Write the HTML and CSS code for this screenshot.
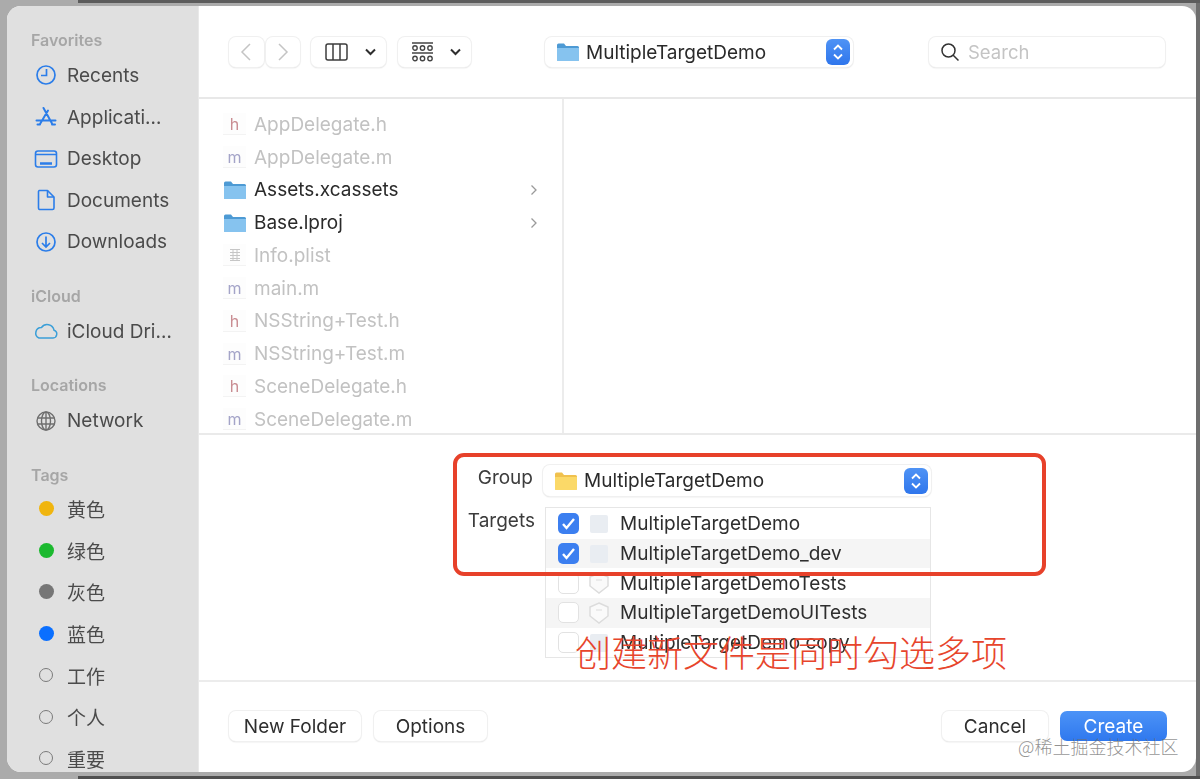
FILE: index.html
```html
<!DOCTYPE html>
<html lang="en">
<head>
<meta charset="utf-8">
<title>Save dialog</title>
<link rel="stylesheet" href="styles.css">
</head>
<body>
<div class="stage">
  <div class="window">
    <aside class="sidebar">
      <section class="side-group">
        <h2 class="side-label">Favorites</h2>
        <div class="side-row"><span class="side-icon"><svg width="24" height="24" viewBox="0 0 24 24" fill="none" stroke="#2b7de9" stroke-width="1.7"><circle cx="12" cy="12" r="9"/><path d="M12.5 6v6.5H7"/></svg></span>Recents</div>
        <div class="side-row"><span class="side-icon"><svg width="24" height="24" viewBox="0 0 24 24" fill="none" stroke="#2b7de9" stroke-width="2" stroke-linecap="round"><path d="M9.500 3l8.500 15.500M14 5.500L6 19M2.500 15.500h19M6 19.500H3.500M21 19.500h-3"/></svg></span>Applicati…</div>
        <div class="side-row"><span class="side-icon"><svg width="24" height="24" viewBox="0 0 24 24" fill="none" stroke="#2b7de9" stroke-width="1.6"><rect x="1.500" y="4" width="21" height="16" rx="2.500"/><path d="M2 7.500h20"/><path d="M6 16.500h12" stroke-width="2.600"/></svg></span>Desktop</div>
        <div class="side-row"><span class="side-icon"><svg width="24" height="24" viewBox="0 0 24 24" fill="none" stroke="#2b7de9" stroke-width="1.6" stroke-linejoin="round"><path d="M5 2.500h8.500L20 9v11a1.500 1.500 0 0 1-1.500 1.500h-13A1.500 1.500 0 0 1 4.500 20V3.500z"/><path d="M13.500 2.500V9H20"/></svg></span>Documents</div>
        <div class="side-row"><span class="side-icon"><svg width="24" height="24" viewBox="0 0 24 24" fill="none" stroke="#2b7de9" stroke-width="1.7"><circle cx="12" cy="12" r="9"/><path d="M12 6.500v10M8 13l4 4 4-4"/></svg></span>Downloads</div>
      </section>
      <section class="side-group">
        <h2 class="side-label">iCloud</h2>
        <div class="side-row"><span class="side-icon"><svg class="cloud" width="26" height="24" viewBox="0 0 26 24" fill="none" stroke="#3b9fd8" stroke-width="1.500"><path d="M6 19h14a4 4 0 0 0 1-7.800A7 7 0 0 0 8.500 8.500 5.500 5.500 0 0 0 6 19z"/></svg></span>iCloud Dri…</div>
      </section>
      <section class="side-group">
        <h2 class="side-label">Locations</h2>
        <div class="side-row"><span class="side-icon"><svg width="24" height="24" viewBox="0 0 24 24" fill="none" stroke="#6f6f6f" stroke-width="1.400"><circle cx="12" cy="12" r="9"/><ellipse cx="12" cy="12" rx="4.500" ry="9"/><path d="M3.500 9h17M3.500 15h17M12 3v18"/></svg></span>Network</div>
      </section>
      <section class="side-group tags-group">
        <h2 class="side-label">Tags</h2>
        <div class="side-row cjk"><span class="side-icon"><i class="dot dot-yellow"></i></span>黄色</div>
        <div class="side-row cjk"><span class="side-icon"><i class="dot dot-green"></i></span>绿色</div>
        <div class="side-row cjk"><span class="side-icon"><i class="dot dot-gray"></i></span>灰色</div>
        <div class="side-row cjk"><span class="side-icon"><i class="dot dot-blue"></i></span>蓝色</div>
        <div class="side-row cjk"><span class="side-icon"><i class="dot dot-empty"></i></span>工作</div>
        <div class="side-row cjk"><span class="side-icon"><i class="dot dot-empty"></i></span>个人</div>
        <div class="side-row cjk"><span class="side-icon"><i class="dot dot-empty"></i></span>重要</div>
      </section>
    </aside>

    <main class="main">
      <header class="toolbar">
        <div class="nav-pair">
          <span class="btn nav-btn"><svg width="14" height="22" viewBox="0 0 14 22" fill="none" stroke="#c4c4c4" stroke-width="1.500"><path d="M11 3L3 11l8 8"/></svg></span>
          <span class="btn nav-btn"><svg width="14" height="22" viewBox="0 0 14 22" fill="none" stroke="#c4c4c4" stroke-width="1.500"><path d="M3 3l8 8-8 8"/></svg></span>
        </div>
        <span class="btn view-btn view-columns">
          <svg width="23" height="18" viewBox="0 0 23 18" fill="none" stroke="#3c3c3c" stroke-width="1.500"><rect x="1" y="1" width="21" height="16" rx="2"/><path d="M8 1v16M15 1v16"/></svg>
          <svg width="11" height="8" viewBox="0 0 11 8" fill="none" stroke="#2e2e2e" stroke-width="2"><path d="M1 1.500l4.500 4.500L10 1.500"/></svg>
        </span>
        <span class="btn view-btn view-gallery">
          <svg width="21" height="21" viewBox="0 0 21 21" fill="none" stroke="#444" stroke-width="1.400"><path d="M0 1h21M0 11h21"/><circle cx="3" cy="6" r="2.200"/><circle cx="10.500" cy="6" r="2.200"/><circle cx="18" cy="6" r="2.200"/><circle cx="3" cy="16.500" r="2.200"/><circle cx="10.500" cy="16.500" r="2.200"/><circle cx="18" cy="16.500" r="2.200"/></svg>
          <svg width="11" height="8" viewBox="0 0 11 8" fill="none" stroke="#2e2e2e" stroke-width="2"><path d="M1 1.500l4.500 4.500L10 1.500"/></svg>
        </span>
        <span class="btn select path-select">
          <svg class="folder" width="23" height="20" viewBox="0 0 23 20"><path d="M1 3a1.500 1.500 0 0 1 1.500-1.500h5.500L10 4h11.500A1.500 1.500 0 0 1 23 5.500v12a1.500 1.500 0 0 1-1.500 1.500h-19A1.500 1.500 0 0 1 1 17.500z" fill="#4d9ad4"/><path d="M1 6h22v11.500a1.500 1.500 0 0 1-1.500 1.500h-19A1.500 1.500 0 0 1 1 17.500z" fill="#86c3ef"/></svg>
          <span class="select-text">MultipleTargetDemo</span>
          <span class="stepper"><svg width="12" height="18" viewBox="0 0 12 18" fill="none" stroke="#fff" stroke-width="1.800"><path d="M2 6.500L6 2.500l4 4M2 11.500l4 4 4-4"/></svg></span>
        </span>
        <span class="btn search">
          <svg width="20" height="20" viewBox="0 0 20 20" fill="none" stroke="#333" stroke-width="1.500"><circle cx="8.500" cy="8.500" r="6.500"/><path d="M13 13l5.500 5.500"/></svg>
          <span class="search-text">Search</span>
        </span>
      </header>

      <div class="browser">
        <ul class="file-column">
          <li class="file dim"><i class="doc doc-h">h</i>AppDelegate.h</li>
          <li class="file dim"><i class="doc doc-m">m</i>AppDelegate.m</li>
          <li class="file"><svg class="folder-big" width="23" height="20" viewBox="0 0 23 20"><path d="M1 3a1.500 1.500 0 0 1 1.500-1.500h5.500L10 4h11.500A1.500 1.500 0 0 1 23 5.500v12a1.500 1.500 0 0 1-1.500 1.500h-19A1.500 1.500 0 0 1 1 17.500z" fill="#4d9ad4"/><path d="M1 6h22v11.500a1.500 1.500 0 0 1-1.500 1.500h-19A1.500 1.500 0 0 1 1 17.500z" fill="#86c3ef"/></svg>Assets.xcassets<svg class="chev" width="8" height="12" viewBox="0 0 8 12" fill="none" stroke="#9a9a9a" stroke-width="1.300"><path d="M1.500 1.500L6 6l-4.500 4.500"/></svg></li>
          <li class="file"><svg class="folder-big" width="23" height="20" viewBox="0 0 23 20"><path d="M1 3a1.500 1.500 0 0 1 1.500-1.500h5.500L10 4h11.500A1.500 1.500 0 0 1 23 5.500v12a1.500 1.500 0 0 1-1.500 1.500h-19A1.500 1.500 0 0 1 1 17.500z" fill="#4d9ad4"/><path d="M1 6h22v11.500a1.500 1.500 0 0 1-1.500 1.500h-19A1.500 1.500 0 0 1 1 17.500z" fill="#86c3ef"/></svg>Base.lproj<svg class="chev" width="8" height="12" viewBox="0 0 8 12" fill="none" stroke="#9a9a9a" stroke-width="1.300"><path d="M1.500 1.500L6 6l-4.500 4.500"/></svg></li>
          <li class="file dim"><i class="doc doc-list"><svg width="10" height="12" viewBox="0 0 10 12" fill="none" stroke="#c6c6c6" stroke-width="1"><path d="M0 .5h10M0 3.500h10M0 6.500h10M0 9.500h10M0 11.500h10M3 0v12M7 0v12"/></svg></i>Info.plist</li>
          <li class="file dim"><i class="doc doc-m">m</i>main.m</li>
          <li class="file dim"><i class="doc doc-h">h</i>NSString+Test.h</li>
          <li class="file dim"><i class="doc doc-m">m</i>NSString+Test.m</li>
          <li class="file dim"><i class="doc doc-h">h</i>SceneDelegate.h</li>
          <li class="file dim"><i class="doc doc-m">m</i>SceneDelegate.m</li>
        </ul>
        <div class="preview-column"></div>
      </div>

      <section class="options">
        <div class="form-grid">
          <span class="form-label group-label">Group</span>
          <span class="btn select group-select">
            <svg width="23" height="20" viewBox="0 0 23 20"><path d="M1 3a1.500 1.500 0 0 1 1.500-1.500h5.500L10 4h11.500A1.500 1.500 0 0 1 23 5.500v12a1.500 1.500 0 0 1-1.500 1.500h-19A1.500 1.500 0 0 1 1 17.500z" fill="#f0c14e"/><path d="M1 6h22v11.500a1.500 1.500 0 0 1-1.500 1.500h-19A1.500 1.500 0 0 1 1 17.500z" fill="#fbd968"/></svg>
            <span class="select-text">MultipleTargetDemo</span>
            <span class="stepper"><svg width="12" height="18" viewBox="0 0 12 18" fill="none" stroke="#fff" stroke-width="1.800"><path d="M2 6.500L6 2.500l4 4M2 11.500l4 4 4-4"/></svg></span>
          </span>
          <span class="form-label targets-label">Targets</span>
          <ul class="target-list">
            <li class="target"><i class="check on"><svg width="15" height="13" viewBox="0 0 15 13" fill="none" stroke="#fff" stroke-width="2.400"><path d="M2 7l3.500 4L13 2"/></svg></i><i class="app-icon"></i>MultipleTargetDemo</li>
            <li class="target shaded"><i class="check on"><svg width="15" height="13" viewBox="0 0 15 13" fill="none" stroke="#fff" stroke-width="2.400"><path d="M2 7l3.500 4L13 2"/></svg></i><i class="app-icon"></i>MultipleTargetDemo_dev</li>
            <li class="target"><i class="check"></i><svg class="shield" width="24" height="24" viewBox="0 0 24 24" fill="#fafafa" stroke="#dcdcdc" stroke-width="1.500"><path d="M12 2l9 4v9l-9 7-9-7V6z"/><path d="M9 9h6" stroke-width="1"/></svg>MultipleTargetDemoTests</li>
            <li class="target shaded"><i class="check"></i><svg class="shield" width="24" height="24" viewBox="0 0 24 24" fill="#fafafa" stroke="#dcdcdc" stroke-width="1.500"><path d="M12 2l9 4v9l-9 7-9-7V6z"/><path d="M9 9h6" stroke-width="1"/></svg>MultipleTargetDemoUITests</li>
            <li class="target"><i class="check"></i><i class="app-icon"></i>MultipleTargetDemo copy</li>
          </ul>
        </div>
      </section>

      <footer class="footer">
        <span class="btn foot-btn new-folder">New Folder</span>
        <span class="btn foot-btn options-btn">Options</span>
        <span class="foot-spacer"></span>
        <span class="btn foot-btn cancel">Cancel</span>
        <span class="foot-btn create">Create</span>
      </footer>
    </main>
  </div>

  <div class="callout"></div>
  <div class="note">创建新文件是同时勾选多项</div>
  <div class="watermark">@稀土掘金技术社区</div>
</div>
</body>
</html>
```
FILE: styles.css
```css
* { box-sizing: border-box; }
html, body { margin: 0; padding: 0; }
body {
  width: 1200px;
  height: 779px;
  overflow: hidden;
  font-family: Inter, "Noto Sans CJK SC", sans-serif;
}
.stage {
  position: relative;
  width: 1200px;
  height: 779px;
  padding: 6px 4px 7px 7px;
  background:
    linear-gradient(#5c5c5c, #5c5c5c) 78px 0 / 1122px 3px no-repeat,
    linear-gradient(#4f4f4f, #4f4f4f) 78px 776px / 1122px 3px no-repeat,
    linear-gradient(#6e6e6e, #6e6e6e) 1196px 0 / 4px 779px no-repeat,
    #ababab;
}
.window {
  display: flex;
  width: 1189px;
  height: 766px;
  border-radius: 14px;
  overflow: hidden;
  background: #fff;
  filter: blur(0.35px);
}

/* Sidebar */
.sidebar {
  flex: 0 0 192px;
  padding: 24px 0 0 24px;
  background: #e0e0e0;
  border-right: 1px solid #e9e9e9;
  overflow: hidden;
}
.side-group { margin-bottom: 23.2px; }
.side-label {
  margin: 0 0 4.7px;
  height: 20px;
  line-height: 20px;
  font-size: 16px;
  font-weight: 600;
  color: #a6a6a6;
}
.tags-group .side-label { margin-bottom: 3.2px; }
.side-row {
  display: flex;
  align-items: center;
  height: 41.6px;
  padding-left: 3px;
  gap: 9px;
  font-size: 19px;
  color: #4b4b4b;
  white-space: nowrap;
}
.side-icon {
  flex: 0 0 24px;
  display: flex;
  align-items: center;
  justify-content: center;
}
.cloud { margin: 0 -1px; flex: none; }
.dot {
  display: block;
  width: 15px;
  height: 15px;
  border-radius: 50%;
}
.dot-yellow { background: #f0b50f; }
.dot-green { background: #1cb92f; }
.dot-gray { background: #767676; }
.dot-blue { background: #0a6fff; }
.dot-empty { border: 1.5px solid #7a7a7a; width: 14px; height: 14px; }

/* Main column */
.main {
  flex: 1;
  display: flex;
  flex-direction: column;
  min-width: 0;
}
.toolbar {
  flex: 0 0 93px;
  display: flex;
  align-items: flex-start;
  padding: 31px 0 0 30px;
  border-bottom: 2px solid #e8e8e8;
}
.btn {
  display: flex;
  align-items: center;
  height: 30px;
  border-radius: 7px;
  background: #fff;
  box-shadow: 0 0 0 1px #f0f0f0, 0 1px 1.5px rgba(0,0,0,.2);
}
.nav-pair { display: flex; gap: 2px; }
.nav-btn { width: 34.5px; justify-content: center; }
.view-btn { justify-content: space-between; }
.view-columns { width: 75px; margin-left: 11px; padding: 0 10px 0 14px; }
.view-gallery { width: 73px; margin-left: 12px; padding: 0 10px 0 14px; }
.select { gap: 0; }
.path-select { width: 308px; margin-left: 74px; padding-left: 11px; }
.select-text {
  flex: 1;
  margin-left: 7px;
  font-size: 19px;
  color: #2a2a2a;
  white-space: nowrap;
}
.stepper {
  flex: 0 0 24px;
  height: 26px;
  margin-right: 3px;
  display: flex;
  align-items: center;
  justify-content: center;
  border-radius: 6px;
  background: linear-gradient(#4f93f5, #2f76ec);
}
.search { width: 236px; margin-left: 76px; padding-left: 11px; }
.search-text {
  margin-left: 8px;
  font-size: 18.5px;
  color: #c4c4c4;
}

/* File browser */
.browser {
  flex: 0 0 336px;
  min-height: 0;
  display: flex;
  border-bottom: 2px solid #eaeaea;
}
.file-column {
  flex: 0 0 365px;
  margin: 0;
  padding: 9px 0 0 24px;
  list-style: none;
  border-right: 2px solid #ececec;
  overflow: hidden;
}
.file {
  display: flex;
  align-items: center;
  gap: 8px;
  height: 32.75px;
  padding-right: 24px;
  font-size: 19px;
  color: #2a2a2a;
  white-space: nowrap;
}
.file.dim { color: #c2c2c2; }
.doc {
  flex: 0 0 23px;
  height: 22px;
  display: flex;
  align-items: center;
  justify-content: center;
  font-style: normal;
  font-size: 16px;
  background: #fdfdfd;
  box-shadow: inset 0 -1px 0 #f3f3f3;
}
.doc-h { color: #c98d92; }
.doc-m { color: #a4a4c8; }
.folder-big { flex: 0 0 23px; }
.chev { margin-left: auto; }
.preview-column { flex: 1; }

/* Options */
.options {
  flex: 0 0 247px;
  padding-top: 30px;
  border-bottom: 2px solid #ececec;
  overflow: hidden;
}
.form-grid {
  display: grid;
  grid-template-columns: 336px 388px;
  column-gap: 8px;
  row-gap: 11px;
  align-items: start;
}
.form-label {
  justify-self: end;
  font-size: 19px;
  color: #3c3c3c;
}
.group-label { margin-right: 2px; line-height: 26px; }
.targets-label { line-height: 28px; }
.group-select { padding-left: 11px; height: 31px; }
.target-list {
  width: 386px;
  height: 151px;
  margin: 0 0 0 2px;
  padding: 1px 0 0;
  list-style: none;
  border: 1px solid #e6e6e6;
  overflow: hidden;
}
.target {
  display: flex;
  align-items: center;
  height: 29.7px;
  padding-left: 12px;
  font-size: 19px;
  color: #2e2e2e;
  white-space: nowrap;
}
.target.shaded { background: #f5f5f5; }
.check {
  flex: 0 0 21px;
  height: 21px;
  display: flex;
  align-items: center;
  justify-content: center;
  border-radius: 5px;
  background: #fff;
  border: 1px solid #e2e2e2;
}
.check.on { background: #3c7ff0; border: 0; }
.app-icon {
  flex: 0 0 18px;
  height: 18px;
  margin: 0 12px 0 11px;
  background: #e9edf2;
  border-radius: 2px;
}
.shield { flex: 0 0 24px; margin: 0 9px 0 8px; }

/* Footer */
.footer {
  flex: 1;
  display: flex;
  align-items: flex-start;
  padding: 29px 29px 0 30px;
}
.foot-btn {
  display: flex;
  align-items: center;
  justify-content: center;
  height: 30px;
  border-radius: 7px;
  font-size: 19px;
  color: #2e2e2e;
  white-space: nowrap;
}
.new-folder { width: 132px; }
.options-btn { width: 113px; margin-left: 13px; }
.foot-spacer { flex: 1; }
.cancel { width: 106px; }
.create {
  width: 107px;
  margin-left: 12px;
  color: #fff;
  background: linear-gradient(#4c93f7, #2f78ee);
}

/* Overlays drawn on top of the screenshot */
.callout {
  position: absolute;
  left: 453px;
  top: 452.5px;
  width: 593px;
  height: 123px;
  border: 4px solid #e7412a;
  border-radius: 11px;
}
.note {
  position: absolute;
  left: 575px;
  top: 625px;
  font-family: "Noto Sans CJK SC", sans-serif;
  font-weight: 300;
  font-size: 36px;
  line-height: 52px;
  color: #e7452c;
  white-space: nowrap;
}
.watermark {
  position: absolute;
  left: 1018px;
  top: 734px;
  font-family: "Noto Sans CJK SC", sans-serif;
  font-weight: 300;
  font-size: 18px;
  line-height: 24px;
  color: rgba(110,110,110,.75);
  white-space: nowrap;
}
```
